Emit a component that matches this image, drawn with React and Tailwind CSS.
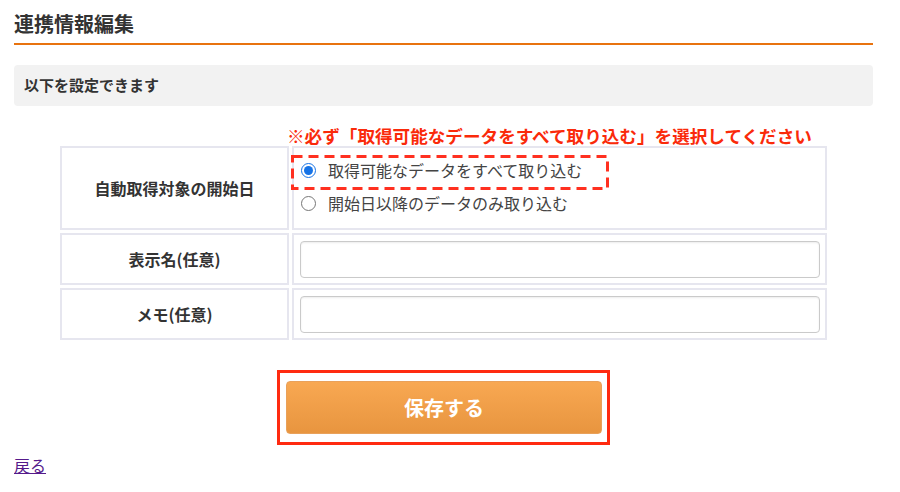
import { useState } from 'react';

const jpFont = { fontFamily: '"Noto Sans CJK JP", "Noto Sans", sans-serif' };

function DashedFrame() {
  return (
    <svg
      className="pointer-events-none absolute left-[-3px] top-[7px]"
      width="318"
      height="35"
      viewBox="0 0 318 35"
    >
      <rect
        x="1.5"
        y="1.5"
        width="315"
        height="32"
        fill="none"
        stroke="#ff3020"
        strokeWidth="3"
        strokeDasharray="10 6"
      />
    </svg>
  );
}

export default function App() {
  const [startMode, setStartMode] = useState('all');

  return (
    <div className="min-h-screen bg-white px-[14px] pr-[27px] text-[#333]" style={jpFont}>
      {/* Title */}
      <h1 className="pt-[10px] pb-[5px] text-[20px] leading-[28px] font-bold border-b-2 border-[#e8730f]">
        連携情報編集
      </h1>

      {/* Info box */}
      <div className="mt-[20px] h-[41px] rounded-[4px] bg-[#f2f2f2] px-[10px] flex items-center text-[15px] font-bold">
        以下を設定できます
      </div>

      <div className="w-[767px] mx-auto">
        <p className="mt-[20px] pl-[227px] text-[17.6px] leading-[20px] font-bold text-[#fa2a0a] whitespace-nowrap">
          ※必ず「取得可能なデータをすべて取り込む」を選択してください
        </p>

        {/* Form table */}
        <div className="grid grid-cols-[229px_535px] gap-[3px]">
          <div className="h-[84px] border-2 border-[#e6e6ef] flex items-center justify-center text-[16px] font-bold">
            自動取得対象の開始日
          </div>
          <div className="relative h-[84px] border-2 border-[#e6e6ef] pl-[7px] pb-[3px] flex flex-col justify-center gap-[9px] text-[16px] text-[#444]">
            <label className="flex items-center leading-[24px]">
              <input
                type="radio"
                name="start"
                checked={startMode === 'all'}
                onChange={() => setStartMode('all')}
                className="m-0 w-[15px] h-[15px] accent-[#1773e6]"
              />
              <span className="ml-[12px]">取得可能なデータをすべて取り込む</span>
            </label>
            <label className="flex items-center leading-[24px]">
              <input
                type="radio"
                name="start"
                checked={startMode === 'from'}
                onChange={() => setStartMode('from')}
                className="m-0 w-[15px] h-[15px] accent-[#1773e6]"
              />
              <span className="ml-[12px]">開始日以降のデータのみ取り込む</span>
            </label>
            <DashedFrame />
          </div>

          <div className="h-[52px] border-2 border-[#e6e6ef] flex items-center justify-center text-[16px] font-bold">
            表示名(任意)
          </div>
          <div className="h-[52px] border-2 border-[#e6e6ef] pl-[6px] pr-[5px] flex items-center">
            <input
              type="text"
              className="w-full h-[37px] rounded-[4px] border border-[#cacaca] shadow-[inset_0_1px_2px_rgba(0,0,0,0.08)] px-2 text-[15px] outline-none"
            />
          </div>

          <div className="h-[52px] border-2 border-[#e6e6ef] flex items-center justify-center text-[16px] font-bold">
            メモ(任意)
          </div>
          <div className="h-[52px] border-2 border-[#e6e6ef] pl-[6px] pr-[5px] flex items-center">
            <input
              type="text"
              className="w-full h-[37px] rounded-[4px] border border-[#cacaca] shadow-[inset_0_1px_2px_rgba(0,0,0,0.08)] px-2 text-[15px] outline-none"
            />
          </div>
        </div>
      </div>

      {/* Save */}
      <div className="mt-[30px] flex justify-center">
        <div className="w-[333px] h-[75px] border-[3px] border-[#ff2a10] pt-[8px] pl-[6px] pr-[5px]">
          <button
            type="button"
            className="w-full h-[53px] rounded-[4px] border border-[#e9a15a] bg-gradient-to-b from-[#f8a852] to-[#e8953f] text-white text-[20px] font-bold"
          >
            保存する
          </button>
        </div>
      </div>

      <a href="#" className="inline-block mt-[8px] text-[16px] leading-[24px] text-[#551a8b] underline">
        戻る
      </a>
    </div>
  );
}
